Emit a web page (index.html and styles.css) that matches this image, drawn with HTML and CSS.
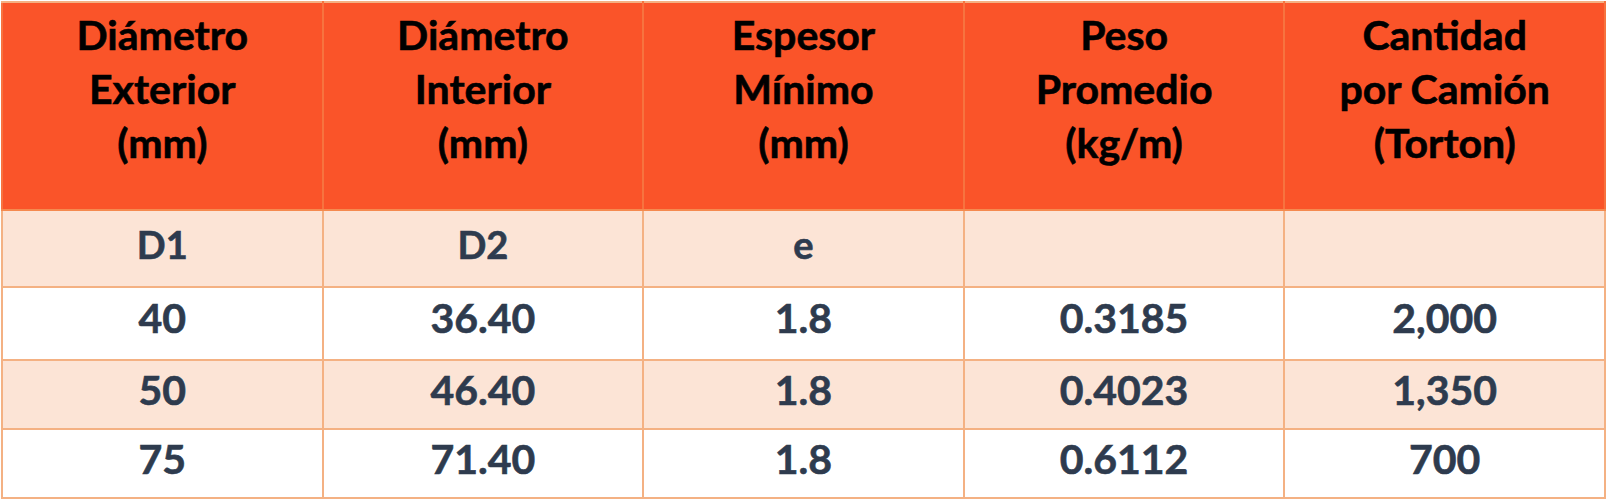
FILE: index.html
```html
<!DOCTYPE html>
<html lang="es">
<head>
<meta charset="utf-8">
<title>Tabla de especificaciones</title>
<link rel="stylesheet" href="styles.css">
</head>
<body>
<table class="spec">
  <colgroup>
    <col class="c"><col class="c"><col class="c"><col class="c"><col class="c">
  </colgroup>
  <thead>
    <tr class="head">
      <th>Diámetro<br>Exterior<br>(mm)</th>
      <th>Diámetro<br>Interior<br>(mm)</th>
      <th>Espesor<br>Mínimo<br>(mm)</th>
      <th>Peso<br>Promedio<br>(kg/m)</th>
      <th>Cantidad<br>por Camión<br>(Torton)</th>
    </tr>
  </thead>
  <tbody>
    <tr class="sym">
      <td>D1</td><td>D2</td><td>e</td><td></td><td></td>
    </tr>
    <tr class="row r1">
      <td>40</td><td>36.40</td><td>1.8</td><td>0.3185</td><td>2,000</td>
    </tr>
    <tr class="row r2 tint">
      <td>50</td><td>46.40</td><td>1.8</td><td>0.4023</td><td>1,350</td>
    </tr>
    <tr class="row r3">
      <td>75</td><td>71.40</td><td>1.8</td><td>0.6112</td><td>700</td>
    </tr>
  </tbody>
</table>
</body>
</html>
```

FILE: styles.css
```css
html, body {
  margin: 0;
  padding: 0;
  background: #ffffff;
}

body {
  padding: 1px 0 0 1px;
  font-family: Lato, "Liberation Sans", sans-serif;
  font-weight: 700;
}

.spec {
  width: 1605px;
  table-layout: fixed;
  border-collapse: collapse;
  border: 2px solid #f4b183;
}

.spec th,
.spec td {
  border: 2px solid #f4b183;
  text-align: center;
  padding: 0;
  -webkit-text-stroke: 0.6px currentColor;
}

.head {
  height: 208px;
  background: #fa5429;
}

.head th {
  color: #000000;
  font-size: 41px;
  line-height: 54px;
  vertical-align: top;
  padding-top: 5px;
  font-weight: 700;
  border-left-color: #f7733f;
  border-right-color: #f7733f;
  border-bottom-color: #f58a4f;
}

.sym {
  height: 77px;
  background: #fce4d6;
}

.sym td {
  color: #2e3b4e;
  font-size: 38px;
  line-height: 46px;
  vertical-align: bottom;
  padding-bottom: 19px;
}

.row td {
  color: #2e3b4e;
  font-size: 41px;
  line-height: 48px;
  vertical-align: bottom;
}

.r1 {
  height: 73px;
}

.r1 td {
  padding-bottom: 17px;
}

.r2,
.r3 {
  height: 69px;
}

.r2 td,
.r3 td {
  padding-bottom: 14px;
}

.tint {
  background: #fce4d6;
}
```
